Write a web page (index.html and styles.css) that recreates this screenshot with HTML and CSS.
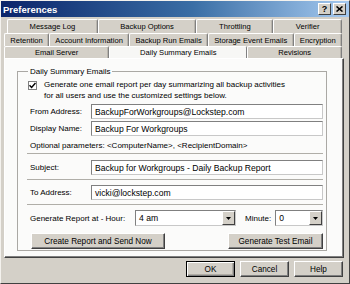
FILE: index.html
```html
<!DOCTYPE html>
<html lang="en">
<head>
    <meta charset="UTF-8">
    <title>Preferences</title>
    <link rel="stylesheet" href="styles.css">
</head>
<body>

<div class="window">
    <div class="titlebar">
        <span class="title">Preferences</span>
        <div class="title-buttons">
            <span class="tbtn">?</span>
            <span class="tbtn">
                <svg width="7" height="6" viewBox="0 0 7 6"><path d="M0.5 0.5 L6.5 5.5 M6.5 0.5 L0.5 5.5" stroke="#000" stroke-width="1.6"/></svg>
            </span>
        </div>
    </div>

    <div class="tabs">
        <div class="tab-row row-back">
            <div class="tab">Message Log</div>
            <div class="tab">Backup Options</div>
            <div class="tab">Throttling</div>
            <div class="tab">Verifier</div>
        </div>
        <div class="tab-row row-mid">
            <div class="tab">Retention</div>
            <div class="tab">Account Information</div>
            <div class="tab">Backup Run Emails</div>
            <div class="tab">Storage Event Emails</div>
            <div class="tab">Encryption</div>
        </div>
        <div class="tab-row row-front">
            <div class="tab">Email Server</div>
            <div class="tab active">Daily Summary Emails</div>
            <div class="tab">Revisions</div>
        </div>
    </div>

    <div class="panel">
        <fieldset class="group">
            <legend>Daily Summary Emails</legend>

            <div class="check">
                <span class="box">
                    <svg width="7" height="7" viewBox="0 0 7 7"><path d="M0.5 3.2 L2.6 5.4 L6.5 1" fill="none" stroke="#000" stroke-width="1.5"/></svg>
                </span>
                <span>Generate one email report per day summarizing all backup activities<br>for all users and use the customized settings below.</span>
            </div>

            <div class="field field-from">
                <span class="label">From Address:</span>
                <div class="input">BackupForWorkgroups@Lockstep.com</div>
            </div>
            <div class="field field-name">
                <span class="label">Display Name:</span>
                <div class="input">Backup For Workgroups</div>
            </div>

            <div class="hint">Optional parameters: &lt;ComputerName&gt;, &lt;RecipientDomain&gt;</div>

            <div class="field sep">
                <span class="label">Subject:</span>
                <div class="input">Backup for Workgroups - Daily Backup Report</div>
            </div>
            <div class="field sep">
                <span class="label">To Address:</span>
                <div class="input">vicki@lockstep.com</div>
            </div>

            <div class="schedule sep">
                <span class="label">Generate Report at - Hour:</span>
                <div class="select hour">
                    <span class="value">4 am</span>
                    <span class="arrow"><svg width="5" height="3" viewBox="0 0 5 3"><path d="M0 0 H5 L2.5 3 Z" fill="#000"/></svg></span>
                </div>
                <span class="minute-label">Minute:</span>
                <div class="select minute">
                    <span class="value">0</span>
                    <span class="arrow"><svg width="5" height="3" viewBox="0 0 5 3"><path d="M0 0 H5 L2.5 3 Z" fill="#000"/></svg></span>
                </div>
            </div>

            <div class="group-buttons">
                <button class="btn btn-wide">Create Report and Send Now</button>
                <button class="btn btn-test">Generate Test Email</button>
            </div>
        </fieldset>
    </div>

    <div class="actions">
        <button class="btn default">OK</button>
        <button class="btn">Cancel</button>
        <button class="btn">Help</button>
    </div>
</div>

</body>
</html>
```

FILE: styles.css
```css
body {
    margin: 0;
    padding: 0;
    font-family: "Liberation Sans", Arial, sans-serif;
    font-size: 8px;
    color: #000;
    background-color: #d4d0c8;
}

.window {
    width: 350px;
    height: 284px;
    box-sizing: border-box;
    border: 1px solid;
    border-color: #f4f2ee #404040 #404040 #f4f2ee;
    background-color: #d4d0c8;
    overflow: hidden;
}

/* title bar */
.titlebar {
    height: 16px;
    display: flex;
    align-items: center;
    justify-content: space-between;
    padding: 0 3px 0 2px;
    background: linear-gradient(to right, #0a246a 0%, #3a6ea5 55%, #a6caf0 100%);
}

.title {
    color: #fff;
    font-weight: bold;
    font-size: 9.5px;
}

.title-buttons {
    display: flex;
    gap: 2px;
}

.tbtn {
    width: 11px;
    height: 10px;
    display: flex;
    align-items: center;
    justify-content: center;
    background-color: #d4d0c8;
    border: 1px solid;
    border-color: #fff #404040 #404040 #fff;
    font-weight: bold;
    font-size: 9px;
    line-height: 1;
}

/* tabs */
.tabs {
    margin: 2px 0 0 3px;
    width: 338px;
}

.tab-row {
    display: flex;
}

.row-back {
    margin-left: 3px;
    height: 14px;
}

.row-mid {
    height: 13px;
}

.row-front {
    height: 12px;
}

.tab {
    flex: 1 1 auto;
    display: flex;
    align-items: center;
    justify-content: center;
    padding: 0 3px;
    white-space: nowrap;
    border-top: 1px solid #fff;
    border-left: 1px solid #fff;
    border-right: 1px solid #808080;
    border-radius: 2px 2px 0 0;
    box-shadow: inset -1px 0 0 #b8b4ac;
    font-size: 7.6px;
}

.tab.active {
    background-color: #f7f7f5;
    box-shadow: none;
}

/* page panel */
.panel {
    margin: 0 5px 0 3px;
    height: 200px;
    box-sizing: border-box;
    border: 1px solid;
    border-color: #fff #404040 #404040 #fff;
    box-shadow: inset -1px -1px 0 #808080;
    background-color: #fbfbfa;
    padding: 8px 16px 0 12px;
}

.group {
    margin: 0;
    min-width: 0;
    padding: 3px 3px 0 9px;
    height: 184px;
    box-sizing: border-box;
    border: 1px solid #aaa8a4;
}

.group legend {
    padding: 0 2px;
    margin-left: 1px;
    font-size: 8px;
}

.check {
    display: flex;
    gap: 7px;
    line-height: 11px;
    padding-left: 1px;
}

.box {
    width: 7px;
    height: 7px;
    margin-top: 2px;
    display: flex;
    align-items: center;
    justify-content: center;
    border: 1px solid #808080;
    background-color: #fff;
    flex: none;
}

.field {
    display: flex;
    align-items: center;
    padding-left: 3px;
}

.field .label {
    width: 61px;
    flex: none;
}

.field-from {
    margin-top: 3px;
}

.field-name {
    margin-top: 2px;
}

.input {
    flex: 1;
    height: 15px;
    box-sizing: border-box;
    padding: 0 3px;
    display: flex;
    align-items: center;
    background-color: #fff;
    border: 1px solid;
    border-color: #808080 #c8c8c8 #c8c8c8 #808080;
    font-size: 8.6px;
    white-space: nowrap;
}

.hint {
    padding-left: 3px;
    margin-top: 4px;
    line-height: 11px;
}

.sep {
    margin-top: 4px;
    padding-top: 5px;
    border-top: 1px solid #b0aea8;
}

.hint + .sep {
    margin-top: 2px;
    padding-top: 6px;
}

.schedule {
    display: flex;
    align-items: center;
    padding-left: 3px;
}

.schedule .label {
    width: 105px;
    flex: none;
    white-space: nowrap;
}

.minute-label {
    flex: none;
    margin: 0 4px 0 9px;
    white-space: nowrap;
}

.select {
    height: 16px;
    box-sizing: border-box;
    display: flex;
    align-items: stretch;
    background-color: #fff;
    border: 1px solid;
    border-color: #808080 #c8c8c8 #c8c8c8 #808080;
    font-size: 8.6px;
}

.select.hour {
    width: 101px;
}

.select.minute {
    flex: 1;
}

.select .value {
    flex: 1;
    display: flex;
    align-items: center;
    padding-left: 3px;
}

.select .arrow {
    width: 11px;
    display: flex;
    align-items: center;
    justify-content: center;
    background-color: #d4d0c8;
    border: 1px solid;
    border-color: #fff #404040 #404040 #fff;
}

.group-buttons {
    display: flex;
    justify-content: space-between;
    margin-top: 7px;
    padding-left: 4px;
}

.btn {
    height: 16px;
    padding: 0;
    font-family: "Liberation Sans", Arial, sans-serif;
    font-size: 8.2px;
    color: #000;
    background-color: #d4d0c8;
    border: 1px solid;
    border-color: #fff #404040 #404040 #fff;
    box-shadow: inset -1px -1px 0 #808080;
    cursor: pointer;
}

.btn-wide {
    width: 134px;
}

.btn-test {
    width: 95px;
}

/* dialog buttons */
.actions {
    display: flex;
    justify-content: flex-end;
    gap: 5px;
    margin-top: 3px;
    padding-right: 6px;
}

.actions .btn {
    width: 49px;
}

.actions .btn.default {
    border-color: #000;
    box-shadow: inset 1px 1px 0 #fff, inset -1px -1px 0 #808080, inset -2px -2px 0 #b0aca4;
}
```
